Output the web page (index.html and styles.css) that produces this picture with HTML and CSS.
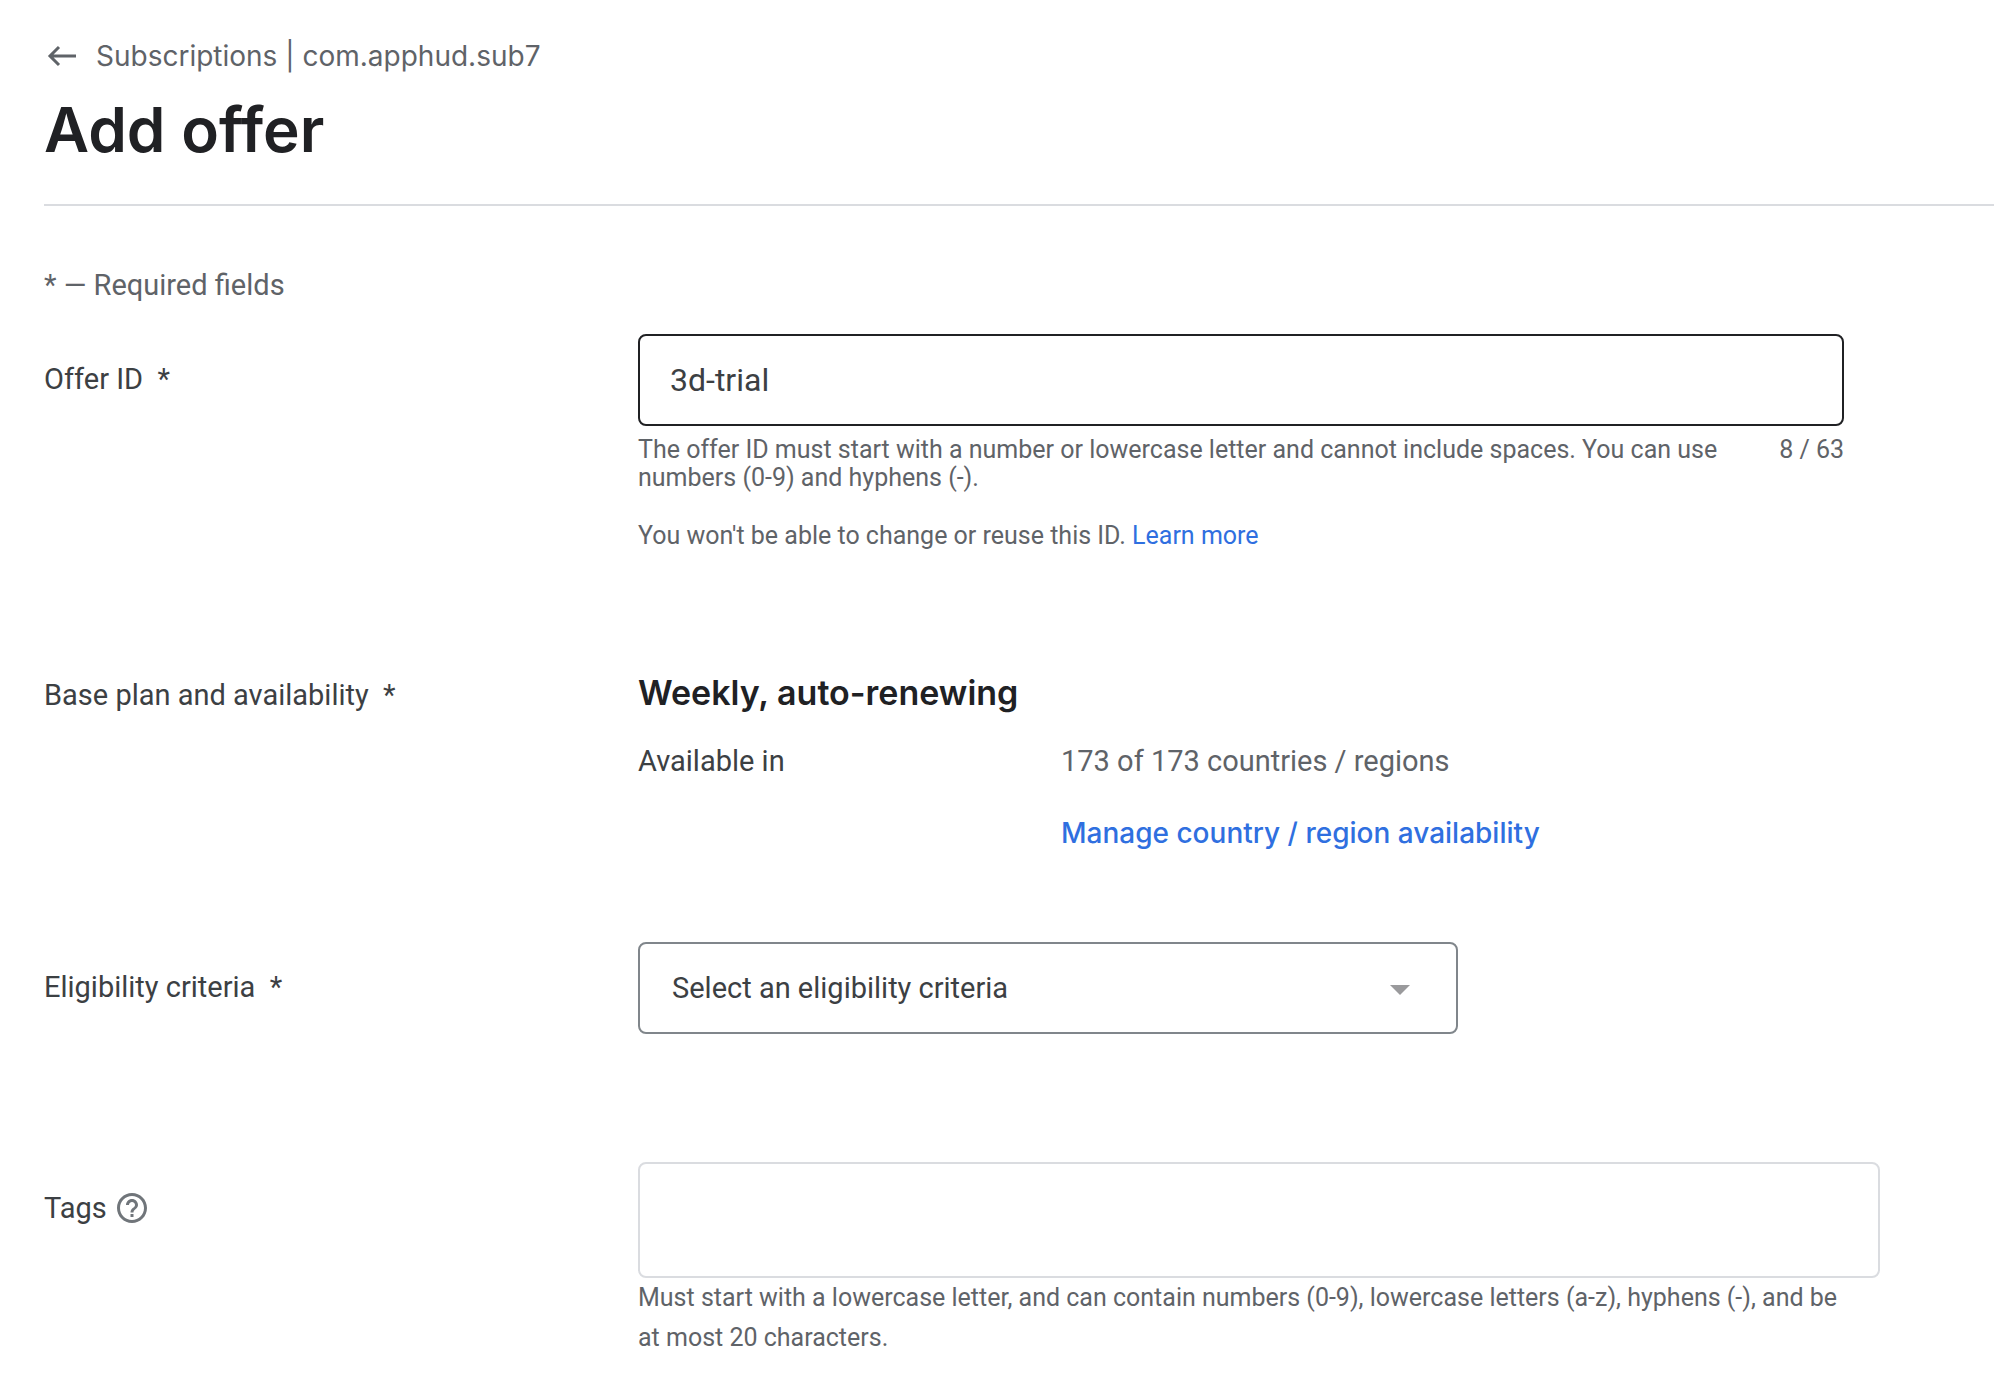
FILE: index.html
```html
<!DOCTYPE html>
<html lang="en">
<head>
    <meta charset="UTF-8">
    <meta name="viewport" content="width=device-width, initial-scale=1.0">
    <title>Add offer</title>
    <link rel="stylesheet" href="styles.css">
</head>
<body>
    <header class="page-header">
        <a class="back-link" href="#">
            <svg class="back-icon" viewBox="0 0 32 32" aria-hidden="true">
                <path d="M30 16H5M13 7L4 16l9 9" fill="none" stroke="currentColor" stroke-width="3"/>
            </svg>
            Subscriptions | com.apphud.sub7
        </a>
        <h1>Add offer</h1>
    </header>

    <form class="offer-form">
        <p class="required-note">* — Required fields</p>

        <div class="row row-offer">
            <label class="row-label" for="offer-id">Offer ID &nbsp;*</label>
            <div class="row-content">
                <input class="text-input" type="text" id="offer-id" value="3d-trial" maxlength="63">
                <div class="hint-line">
                    <p class="hint">The offer ID must start with a number or lowercase letter and cannot include spaces. You can use numbers (0-9) and hyphens (-).</p>
                    <span class="counter">8 / 63</span>
                </div>
                <p class="note">You won't be able to change or reuse this ID. <a href="#">Learn more</a></p>
            </div>
        </div>

        <div class="row row-plan">
            <span class="row-label">Base plan and availability &nbsp;*</span>
            <div class="row-content">
                <h2>Weekly, auto-renewing</h2>
                <dl class="availability">
                    <dt>Available in</dt>
                    <dd>173 of 173 countries / regions</dd>
                    <dd><a class="manage-link" href="#">Manage country / region availability</a></dd>
                </dl>
            </div>
        </div>

        <div class="row row-eligibility">
            <label class="row-label" for="eligibility">Eligibility criteria &nbsp;*</label>
            <div class="row-content">
                <div class="select-box">
                    <select id="eligibility">
                        <option>Select an eligibility criteria</option>
                    </select>
                    <svg class="select-arrow" viewBox="0 0 20 10" aria-hidden="true">
                        <path d="M0 0h20L10 10z" fill="currentColor"/>
                    </svg>
                </div>
            </div>
        </div>

        <div class="row row-tags">
            <div class="row-label">
                <label for="tags">Tags</label>
                <button class="help-button" type="button" aria-label="About tags">
                    <svg viewBox="2 2 20 20" aria-hidden="true">
                        <path fill="currentColor" d="M11 18h2v-2h-2v2zm1-16C6.480 2 2 6.480 2 12s4.480 10 10 10 10-4.480 10-10S17.520 2 12 2zm0 18c-4.410 0-8-3.590-8-8s3.590-8 8-8 8 3.590 8 8-3.590 8-8 8zm0-14c-2.210 0-4 1.790-4 4h2c0-1.100.9-2 2-2s2 .9 2 2c0 2-3 1.750-3 5h2c0-2.250 3-2.500 3-5 0-2.210-1.790-4-4-4z"/>
                    </svg>
                </button>
            </div>
            <div class="row-content">
                <textarea class="tags-input" id="tags"></textarea>
                <p class="tags-hint">Must start with a lowercase letter, and can contain numbers (0-9), lowercase letters (a-z), hyphens (-), and be at most 20 characters.</p>
            </div>
        </div>
    </form>
</body>
</html>
```
FILE: styles.css
```css
* {
    box-sizing: border-box;
}
body {
    margin: 0;
    padding-left: 44px;
    background: #fff;
    font-family: Roboto, "Liberation Sans", sans-serif;
    font-size: 29px;
    line-height: 40px;
    color: #3c4043;
}
h1, h2, p, dl, dd {
    margin: 0;
}
a {
    color: #2f6fe0;
    text-decoration: none;
}
.page-header {
    padding: 36px 0 38px;
    border-bottom: 2px solid #dadce0;
}
.back-link {
    display: flex;
    align-items: center;
    gap: 18px;
    font-family: Inter, sans-serif;
    font-size: 28px;
    font-weight: 400;
    color: #5f6368;
}
.back-icon {
    width: 32px;
    height: 32px;
    margin-left: 2px;
}
h1 {
    margin-top: 18px;
    font-family: Inter, sans-serif;
    font-size: 62px;
    font-weight: 600;
    line-height: 72px;
    color: #202124;
}
.offer-form {
    padding-right: 114px;
}
.required-note {
    padding: 59px 0 29px;
    color: #5f6368;
}
.row {
    display: grid;
    grid-template-columns: 594px 1fr;
}
.row-offer {
    padding-right: 36px;
}
.row-offer .row-label,
.row-eligibility .row-label {
    padding-top: 25px;
}
.text-input {
    display: block;
    width: 100%;
    height: 92px;
    padding: 0 30px;
    border: 2px solid #202124;
    border-radius: 8px;
    background: #fff;
    font: inherit;
    font-size: 32px;
    color: #3c4043;
    outline: none;
}
.hint-line {
    display: flex;
    justify-content: space-between;
    gap: 40px;
    margin-top: 10px;
    font-size: 25px;
    line-height: 28px;
    color: #5f6368;
}
.counter {
    white-space: nowrap;
}
.note {
    margin-top: 24px;
    font-size: 25px;
    color: #5f6368;
}
.row-plan {
    margin-top: 119px;
}
h2 {
    font-family: Inter, sans-serif;
    font-size: 34px;
    font-weight: 600;
    line-height: 36px;
    color: #202124;
}
.availability {
    display: grid;
    grid-template-columns: 423px 1fr;
    row-gap: 32px;
    margin-top: 30px;
}
.availability dd {
    grid-column: 2;
    color: #5f6368;
}
.manage-link {
    font-family: Inter, sans-serif;
    font-size: 28px;
    font-weight: 500;
}
.row-eligibility {
    margin-top: 89px;
}
.select-box {
    position: relative;
    width: 66%;
}
.select-box select {
    display: block;
    width: 100%;
    height: 92px;
    padding: 0 32px;
    border: 2px solid #80868b;
    border-radius: 8px;
    background: #fff;
    font: inherit;
    color: #3c4043;
    appearance: none;
}
.select-arrow {
    position: absolute;
    top: 43px;
    right: 48px;
    width: 20px;
    height: 10px;
    color: #9a9a9c;
    pointer-events: none;
}
.row-tags {
    margin-top: 128px;
}
.row-tags .row-label {
    display: flex;
    align-items: center;
    align-self: start;
    gap: 10px;
    padding-top: 26px;
}
.help-button {
    width: 30px;
    height: 30px;
    padding: 0;
    border: 0;
    background: none;
    color: #70757a;
}
.help-button svg {
    display: block;
    width: 30px;
    height: 30px;
}
.tags-input {
    display: block;
    width: 100%;
    height: 116px;
    padding: 16px 30px;
    border: 2px solid #dadce0;
    border-radius: 8px;
    background: #fff;
    font: inherit;
    color: #3c4043;
    resize: none;
    outline: none;
}
.tags-hint {
    padding-right: 36px;
    font-size: 25px;
    color: #5f6368;
}
```
